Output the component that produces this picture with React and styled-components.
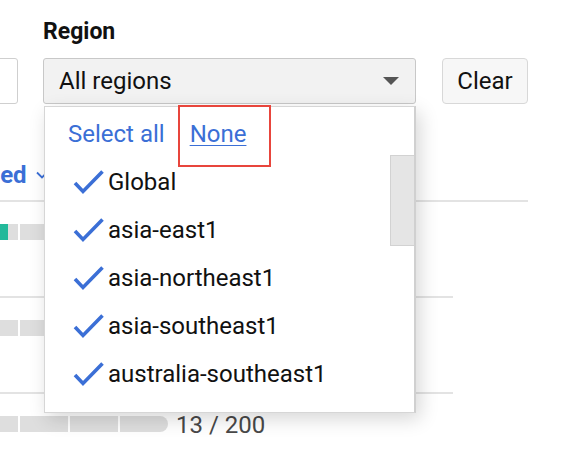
import React from 'react';
import styled, { createGlobalStyle } from 'styled-components';

const GlobalStyle = createGlobalStyle`
  html, body {
    margin: 0;
    background: #fff;
    overflow: hidden;
  }
  body {
    font-family: Roboto, "Liberation Sans", Arial, sans-serif;
    color: #000;
  }
`;

const regions = [
  'Global',
  'asia-east1',
  'asia-northeast1',
  'asia-southeast1',
  'australia-southeast1',
];

// only the last row's count is visible below the open menu
const rows = [
  { fill: 86 },
  { fill: 0 },
  { fill: 0, used: 13, total: 200 },
];

const SEGMENTS = 5;
const SEGMENT_WIDTH = 48;

const CheckIcon = () => (
  <svg width="32" height="26" viewBox="0 0 32 26" aria-hidden="true">
    <polyline
      points="2,14 10,22.5 29.5,2.5"
      fill="none"
      stroke="#3b6fd6"
      strokeWidth="3.6"
      strokeLinecap="butt"
      strokeLinejoin="miter"
    />
  </svg>
);

class App extends React.Component {
  render() {
    return (
      <Page>
        <GlobalStyle />
        <FilterBar>
          <StubField />
          <Field>
            <Label>Region</Label>
            <SelectWrap>
              <SelectBox>
                All regions
                <Caret />
              </SelectBox>
              <Menu>
                <MenuHead>
                  <MenuLink>Select all</MenuLink>
                  <MenuLink $active>None</MenuLink>
                </MenuHead>
                {regions.map(name => (
                  <Option key={name}>
                    <CheckIcon />
                    <OptionText>{name}</OptionText>
                  </Option>
                ))}
                <Thumb />
              </Menu>
            </SelectWrap>
          </Field>
          <ClearButton>Clear</ClearButton>
        </FilterBar>
        <Table>
          <HeaderRow>
            <SortHead>
              Used
              <Chevron viewBox="0 0 12 8" aria-hidden="true">
                <polyline points="1,1.5 6,6.5 11,1.5" fill="none" stroke="#3b6fd6" strokeWidth="1.8" />
              </Chevron>
            </SortHead>
          </HeaderRow>
          {rows.map((row, i) => (
            <Row key={i}>
              <Bar>
                {Array.from({ length: SEGMENTS }).map((_, s) => {
                  const start = s * SEGMENT_WIDTH;
                  const filled = Math.max(0, Math.min(SEGMENT_WIDTH, row.fill - start));
                  return (
                    <Segment key={s} $last={s === SEGMENTS - 1}>
                      <SegmentFill style={{ width: filled }} />
                    </Segment>
                  );
                })}
              </Bar>
              {row.total && (
                <Count>
                  {row.used} / {row.total}
                </Count>
              )}
            </Row>
          ))}
        </Table>
      </Page>
    );
  }
}

const Page = styled.div`
  width: 566px;
  height: 458px;
  padding-top: 18px;
  box-sizing: border-box;
  overflow: hidden;
`;

const FilterBar = styled.div`
  display: flex;
  align-items: flex-end;
  gap: 25px;
`;

const StubField = styled.div`
  width: 60px;
  height: 46px;
  margin-left: -42px;
  box-sizing: border-box;
  border: 1px solid #cfcfcf;
  border-radius: 3px;
  background: #fff;
`;

const Field = styled.div`
  display: flex;
  flex-direction: column;
  width: 373px;
`;

const Label = styled.div`
  font-size: 23px;
  font-weight: 700;
  line-height: 28px;
  margin-bottom: 12px;
  color: #111;
`;

const SelectWrap = styled.div`
  position: relative;
`;

const SelectBox = styled.div`
  display: flex;
  align-items: center;
  justify-content: space-between;
  height: 46px;
  box-sizing: border-box;
  padding: 0 16px 0 15px;
  background: #f2f2f2;
  border: 1px solid #c8c8c8;
  border-radius: 3px;
  font-size: 24px;
  color: #111;
`;

const Caret = styled.span`
  width: 0;
  height: 0;
  border-left: 8px solid transparent;
  border-right: 8px solid transparent;
  border-top: 8px solid #555;
`;

const Menu = styled.div`
  position: absolute;
  top: 48px;
  left: 1px;
  width: 372px;
  box-sizing: border-box;
  padding: 3px 0 14px;
  background: #fff;
  border: 1px solid #d6d6d6;
  border-right: 2px solid #d0d0d0;
  box-shadow: 4px 6px 18px rgba(0, 0, 0, 0.16);
  z-index: 10;
`;

const MenuHead = styled.div`
  display: flex;
  gap: 25px;
  padding-left: 23px;
  height: 48px;
  line-height: 48px;
`;

const MenuLink = styled.span`
  position: relative;
  font-size: 24px;
  color: #3b6fd6;
  text-decoration: ${p => (p.$active ? 'underline' : 'none')};
  text-underline-offset: 3px;
  text-decoration-thickness: 1px;

  ${p =>
    p.$active &&
    `
    &::after {
      content: '';
      position: absolute;
      left: -12px;
      right: -25px;
      top: -5px;
      bottom: -9px;
      border: 2px solid #e8453c;
    }
  `}
`;

const Option = styled.div`
  display: flex;
  align-items: center;
  gap: 3px;
  height: 48px;
  padding-left: 28px;
`;

const OptionText = styled.span`
  font-size: 24px;
  color: #111;
`;

const Thumb = styled.div`
  position: absolute;
  right: 0;
  top: 48px;
  width: 24px;
  height: 91px;
  box-sizing: border-box;
  background: #e5e5e5;
  border: 1px solid #d2d2d2;
  border-right: none;
`;

const ClearButton = styled.button`
  width: 86px;
  height: 46px;
  margin-left: 1px;
  padding: 0;
  background: #f7f7f7;
  border: 1px solid #d8d8d8;
  border-radius: 4px;
  font-family: inherit;
  font-size: 24px;
  color: #111;
`;

const Table = styled.div`
  width: 608px;
  margin-left: -80px;
`;

const HeaderRow = styled.div`
  display: flex;
  align-items: flex-end;
  height: 98px;
  box-sizing: border-box;
  padding-bottom: 12px;
  border-bottom: 2px solid #e3e3e3;
`;

const SortHead = styled.div`
  display: flex;
  align-items: center;
  gap: 9px;
  margin-left: 52px;
  font-size: 24px;
  font-weight: 700;
  line-height: 26px;
  color: #3b6fd6;
`;

const Chevron = styled.svg`
  width: 12px;
  height: 8px;
`;

const Row = styled.div`
  display: flex;
  align-items: flex-start;
  gap: 8px;
  width: 533px;
  height: 96px;
  box-sizing: border-box;
  padding-top: 22px;
  border-bottom: 2px solid #e3e3e3;
`;

const Bar = styled.div`
  display: flex;
  gap: 2px;
`;

const Segment = styled.div`
  width: ${SEGMENT_WIDTH}px;
  height: 16px;
  background: #dedede;
  overflow: hidden;
  border-radius: ${p => (p.$last ? '0 8px 8px 0' : '0')};
`;

const SegmentFill = styled.div`
  height: 100%;
  background: #22b99a;
`;

const Count = styled.span`
  font-size: 24px;
  line-height: 16px;
  margin-top: 1px;
  color: #484848;
`;

export default App;
